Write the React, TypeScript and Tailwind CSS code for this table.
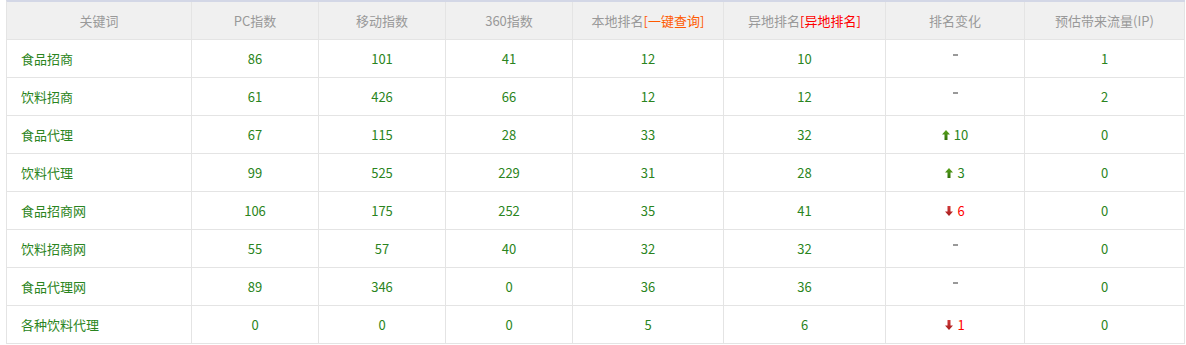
import React from "react";

type Change = { dir: "up" | "down" | "none"; n?: number };
type Row = { kw: string; pc: number; m: number; s: number; local: number; other: number; ch: Change; ip: number };

const rows: Row[] = [
  { kw: "食品招商", pc: 86, m: 101, s: 41, local: 12, other: 10, ch: { dir: "none" }, ip: 1 },
  { kw: "饮料招商", pc: 61, m: 426, s: 66, local: 12, other: 12, ch: { dir: "none" }, ip: 2 },
  { kw: "食品代理", pc: 67, m: 115, s: 28, local: 33, other: 32, ch: { dir: "up", n: 10 }, ip: 0 },
  { kw: "饮料代理", pc: 99, m: 525, s: 229, local: 31, other: 28, ch: { dir: "up", n: 3 }, ip: 0 },
  { kw: "食品招商网", pc: 106, m: 175, s: 252, local: 35, other: 41, ch: { dir: "down", n: 6 }, ip: 0 },
  { kw: "饮料招商网", pc: 55, m: 57, s: 40, local: 32, other: 32, ch: { dir: "none" }, ip: 0 },
  { kw: "食品代理网", pc: 89, m: 346, s: 0, local: 36, other: 36, ch: { dir: "none" }, ip: 0 },
  { kw: "各种饮料代理", pc: 0, m: 0, s: 0, local: 5, other: 6, ch: { dir: "down", n: 1 }, ip: 0 },
];

const widths = ["w-[185px]", "w-[127px]", "w-[127px]", "w-[127px]", "w-[151px]", "w-[162px]", "w-[139px]", "w-[160px]"];

function UpArrow() {
  return (
    <svg width="8" height="10" viewBox="0 0 8 10" className="inline-block">
      <defs>
        <linearGradient id="ug" x1="0" y1="0" x2="0" y2="1">
          <stop offset="0" stopColor="#5aa51c" />
          <stop offset="1" stopColor="#2f6f0a" />
        </linearGradient>
      </defs>
      <path d="M4 0 L8 4.5 L5.5 4.5 L5.5 10 L2.5 10 L2.5 4.5 L0 4.5 Z" fill="url(#ug)" />
    </svg>
  );
}

function DownArrow() {
  return (
    <svg width="8" height="10" viewBox="0 0 8 10" className="inline-block">
      <defs>
        <linearGradient id="dg" x1="0" y1="0" x2="0" y2="1">
          <stop offset="0" stopColor="#d23a3a" />
          <stop offset="1" stopColor="#a51d1d" />
        </linearGradient>
      </defs>
      <path d="M4 10 L8 5.5 L5.5 5.5 L5.5 0 L2.5 0 L2.5 5.5 L0 5.5 Z" fill="url(#dg)" />
    </svg>
  );
}

function ChangeCell({ ch }: { ch: Change }) {
  if (ch.dir === "none") {
    return <span className="inline-block w-[5px] h-[2px] bg-[#999] mb-[8px]" />;
  }
  if (ch.dir === "up") {
    return (
      <span className="inline-flex items-center gap-[4px] text-[#2a8420]">
        <UpArrow />
        <span>{ch.n}</span>
      </span>
    );
  }
  return (
    <span className="inline-flex items-center gap-[4px] text-[#ff0000]">
      <DownArrow />
      <span>{ch.n}</span>
    </span>
  );
}

export default function App() {
  const font = { fontFamily: '"Noto Sans CJK SC", "Microsoft YaHei", sans-serif' };
  const headers: React.ReactNode[] = [
    "关键词",
    "PC指数",
    "移动指数",
    "360指数",
    <span key="a">
      本地排名<span className="text-[#ff5a00]">[一键查询]</span>
    </span>,
    <span key="b">
      异地排名<span className="text-[#ff0000]">[异地排名]</span>
    </span>,
    "排名变化",
    "预估带来流量(IP)",
  ];
  return (
    <div className="w-[1186px] h-[345px] bg-white text-[13px]" style={font}>
      <div className="ml-[6px] w-[1179px]">
        <div className="flex h-[40px] border-t-2 border-t-[#d3d7e6] border-l border-b border-[#e4e4e4] bg-[#f0f0f0] text-[#999]">
          {headers.map((h, i) => (
            <div key={i} className={`${widths[i]} shrink-0 border-r border-[#e4e4e4] flex items-center justify-center`}>
              {h}
            </div>
          ))}
        </div>
        {rows.map((r, idx) => {
          const vals = [r.pc, r.m, r.s, r.local, r.other];
          return (
            <div key={idx} className="flex h-[38px] border-l border-b border-[#e4e4e4] text-[#2a8420]">
              <div className={`${widths[0]} shrink-0 border-r border-[#e4e4e4] flex items-center pl-[14px]`}>{r.kw}</div>
              {vals.map((v, i) => (
                <div key={i} className={`${widths[i + 1]} shrink-0 border-r border-[#e4e4e4] flex items-center justify-center`}>
                  {v}
                </div>
              ))}
              <div className={`${widths[6]} shrink-0 border-r border-[#e4e4e4] flex items-center justify-center`}>
                <ChangeCell ch={r.ch} />
              </div>
              <div className={`${widths[7]} shrink-0 border-r border-[#e4e4e4] flex items-center justify-center`}>{r.ip}</div>
            </div>
          );
        })}
      </div>
    </div>
  );
}
